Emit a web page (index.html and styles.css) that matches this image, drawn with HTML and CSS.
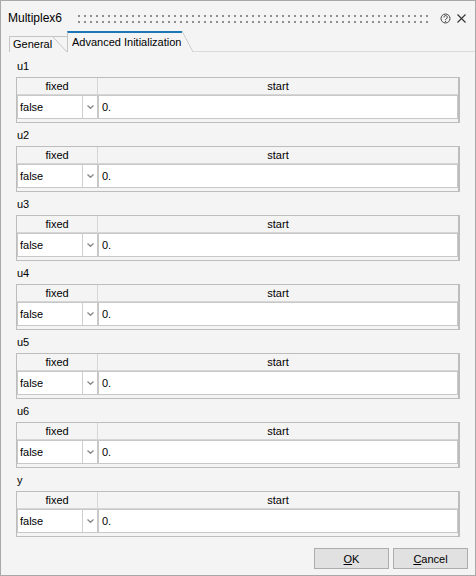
FILE: index.html
```html
<!DOCTYPE html>
<html lang="en">
<head>
    <meta charset="UTF-8">
    <title>Multiplex6</title>
    <link rel="stylesheet" href="styles.css">
</head>
<body>
    <div class="window">
        <div class="titlebar">
            <span class="title">Multiplex6</span>
            <span class="grip"></span>
            <svg class="help" width="11" height="11" viewBox="0 0 11 11">
                <circle cx="5.5" cy="5.5" r="4.5" fill="none" stroke="#444" stroke-width="1"/>
                <path d="M3.9 4.4a1.7 1.7 0 1 1 2.5 1.4c-0.6 0.35-0.9 0.6-0.9 1.3" fill="none" stroke="#444" stroke-width="1"/>
                <circle cx="5.5" cy="8.4" r="0.6" fill="#444"/>
            </svg>
            <svg class="close" width="9" height="9" viewBox="0 0 9 9">
                <path d="M0.5 0.5L8.5 8.5M8.5 0.5L0.5 8.5" stroke="#333" stroke-width="1.1"/>
            </svg>
        </div>

        <div class="tabs">
            <div class="tab">
                <span class="tab-label">General</span>
                <span class="tab-slant"></span>
            </div>
            <div class="tab active">
                <span class="tab-label">Advanced Initialization</span>
                <span class="tab-slant"></span>
            </div>
            <div class="tab-fill"></div>
        </div>

        <div class="pane">
            <div class="param">
                <div class="param-name">u1</div>
                <div class="grid">
                    <div class="grid-head"><div class="head-cell">fixed</div><div class="head-cell">start</div></div>
                    <div class="grid-row">
                        <div class="combo"><span class="combo-value">false</span><span class="combo-arrow"><svg width="7" height="4" viewBox="0 0 7 4"><path d="M0.5 0.5L3.5 3.3L6.5 0.5" fill="none" stroke="#888" stroke-width="1.3"/></svg></span></div>
                        <div class="value">0.</div>
                    </div>
                </div>
            </div>
            <div class="param">
                <div class="param-name">u2</div>
                <div class="grid">
                    <div class="grid-head"><div class="head-cell">fixed</div><div class="head-cell">start</div></div>
                    <div class="grid-row">
                        <div class="combo"><span class="combo-value">false</span><span class="combo-arrow"><svg width="7" height="4" viewBox="0 0 7 4"><path d="M0.5 0.5L3.5 3.3L6.5 0.5" fill="none" stroke="#888" stroke-width="1.3"/></svg></span></div>
                        <div class="value">0.</div>
                    </div>
                </div>
            </div>
            <div class="param">
                <div class="param-name">u3</div>
                <div class="grid">
                    <div class="grid-head"><div class="head-cell">fixed</div><div class="head-cell">start</div></div>
                    <div class="grid-row">
                        <div class="combo"><span class="combo-value">false</span><span class="combo-arrow"><svg width="7" height="4" viewBox="0 0 7 4"><path d="M0.5 0.5L3.5 3.3L6.5 0.5" fill="none" stroke="#888" stroke-width="1.3"/></svg></span></div>
                        <div class="value">0.</div>
                    </div>
                </div>
            </div>
            <div class="param">
                <div class="param-name">u4</div>
                <div class="grid">
                    <div class="grid-head"><div class="head-cell">fixed</div><div class="head-cell">start</div></div>
                    <div class="grid-row">
                        <div class="combo"><span class="combo-value">false</span><span class="combo-arrow"><svg width="7" height="4" viewBox="0 0 7 4"><path d="M0.5 0.5L3.5 3.3L6.5 0.5" fill="none" stroke="#888" stroke-width="1.3"/></svg></span></div>
                        <div class="value">0.</div>
                    </div>
                </div>
            </div>
            <div class="param">
                <div class="param-name">u5</div>
                <div class="grid">
                    <div class="grid-head"><div class="head-cell">fixed</div><div class="head-cell">start</div></div>
                    <div class="grid-row">
                        <div class="combo"><span class="combo-value">false</span><span class="combo-arrow"><svg width="7" height="4" viewBox="0 0 7 4"><path d="M0.5 0.5L3.5 3.3L6.5 0.5" fill="none" stroke="#888" stroke-width="1.3"/></svg></span></div>
                        <div class="value">0.</div>
                    </div>
                </div>
            </div>
            <div class="param">
                <div class="param-name">u6</div>
                <div class="grid">
                    <div class="grid-head"><div class="head-cell">fixed</div><div class="head-cell">start</div></div>
                    <div class="grid-row">
                        <div class="combo"><span class="combo-value">false</span><span class="combo-arrow"><svg width="7" height="4" viewBox="0 0 7 4"><path d="M0.5 0.5L3.5 3.3L6.5 0.5" fill="none" stroke="#888" stroke-width="1.3"/></svg></span></div>
                        <div class="value">0.</div>
                    </div>
                </div>
            </div>
            <div class="param">
                <div class="param-name">y</div>
                <div class="grid">
                    <div class="grid-head"><div class="head-cell">fixed</div><div class="head-cell">start</div></div>
                    <div class="grid-row">
                        <div class="combo"><span class="combo-value">false</span><span class="combo-arrow"><svg width="7" height="4" viewBox="0 0 7 4"><path d="M0.5 0.5L3.5 3.3L6.5 0.5" fill="none" stroke="#888" stroke-width="1.3"/></svg></span></div>
                        <div class="value">0.</div>
                    </div>
                </div>
            </div>
        </div>

        <div class="buttons">
            <button class="btn"><u>O</u>K</button>
            <button class="btn"><u>C</u>ancel</button>
        </div>
    </div>
</body>
</html>
```
FILE: styles.css
```css
body {
    margin: 0;
    font-family: "Liberation Sans", Arial, sans-serif;
    font-size: 11px;
    color: #000;
}
.window {
    width: 476px;
    height: 576px;
    box-sizing: border-box;
    border: 1px solid #a9a9a9;
    background-color: #f4f4f4;
    display: flex;
    flex-direction: column;
}
.titlebar {
    display: flex;
    align-items: center;
    height: 28px;
    box-sizing: border-box;
    padding: 6px 9px 0 7px;
}
.title {
    font-size: 12px;
    line-height: 15px;
}
.grip {
    flex: 1;
    height: 8px;
    margin: 2px 10px 0 16px;
    background: repeating-linear-gradient(90deg, #8e8e8e 0 2px, transparent 2px 6px);
    -webkit-mask: repeating-linear-gradient(180deg, #000 0 2px, transparent 2px 6px);
    mask: repeating-linear-gradient(180deg, #000 0 2px, transparent 2px 6px);
}
.help {
    margin-right: 6px;
}
.tabs {
    display: flex;
    align-items: flex-end;
    height: 23px;
    padding-left: 8px;
}
.tab {
    display: flex;
    height: 16px;
}
.tab-label {
    border-left: 1px solid #c4c4c4;
    border-top: 1px solid #c4c4c4;
    padding: 0 0 0 3px;
    width: 40px;
    line-height: 14px;
}
.tab-slant {
    width: 14px;
    border-top: 1px solid #c4c4c4;
    background: linear-gradient(to top right, transparent calc(50% - 0.7px), #c4c4c4, transparent calc(50% + 0.7px));
}
.tab.active {
    height: 21px;
}
.tab.active .tab-label {
    border-top: 2px solid #1b78b4;
    padding-left: 4px;
    width: 110px;
    line-height: 18px;
}
.tab.active .tab-slant {
    width: 11px;
    border-top: 0;
}
.tab-fill {
    flex: 1;
    border-bottom: 1px solid #dadada;
}
.pane {
    flex: 1;
    padding: 6px 0 0 15px;
}
.param {
    margin-bottom: 4px;
}
.param-name {
    line-height: 16px;
    margin-bottom: 3px;
    padding-left: 1px;
}
.grid {
    width: 444px;
    box-sizing: border-box;
    border: 1px solid #bdbdbd;
    border-right-width: 2px;
    padding-bottom: 3px;
}
.grid-head {
    display: grid;
    grid-template-columns: 81px 1fr;
    height: 16px;
    line-height: 16px;
    border-bottom: 1px solid #d6d6d6;
    text-align: center;
}
.head-cell:first-child {
    border-right: 1px solid #d6d6d6;
}
.grid-row {
    display: flex;
    height: 24px;
}
.combo {
    width: 81px;
    box-sizing: border-box;
    display: flex;
    background-color: #fff;
    border: 1px solid #c8c8c8;
}
.combo-value {
    flex: 1;
    padding-left: 2px;
    line-height: 22px;
}
.combo-arrow {
    width: 14px;
    border-left: 1px solid #cfcfcf;
    display: flex;
    align-items: center;
    justify-content: center;
}
.value {
    flex: 1;
    background-color: #fff;
    border: 1px solid #c8c8c8;
    padding-left: 3px;
    line-height: 22px;
}
.buttons {
    display: flex;
    justify-content: flex-end;
    gap: 4px;
    padding: 0 7px 6px 0;
}
.btn {
    width: 75px;
    height: 21px;
    padding: 0;
    background-color: #e1e1e1;
    border: 1px solid #adadad;
    font-family: "Liberation Sans", Arial, sans-serif;
    font-size: 11px;
    color: #000;
}
```
